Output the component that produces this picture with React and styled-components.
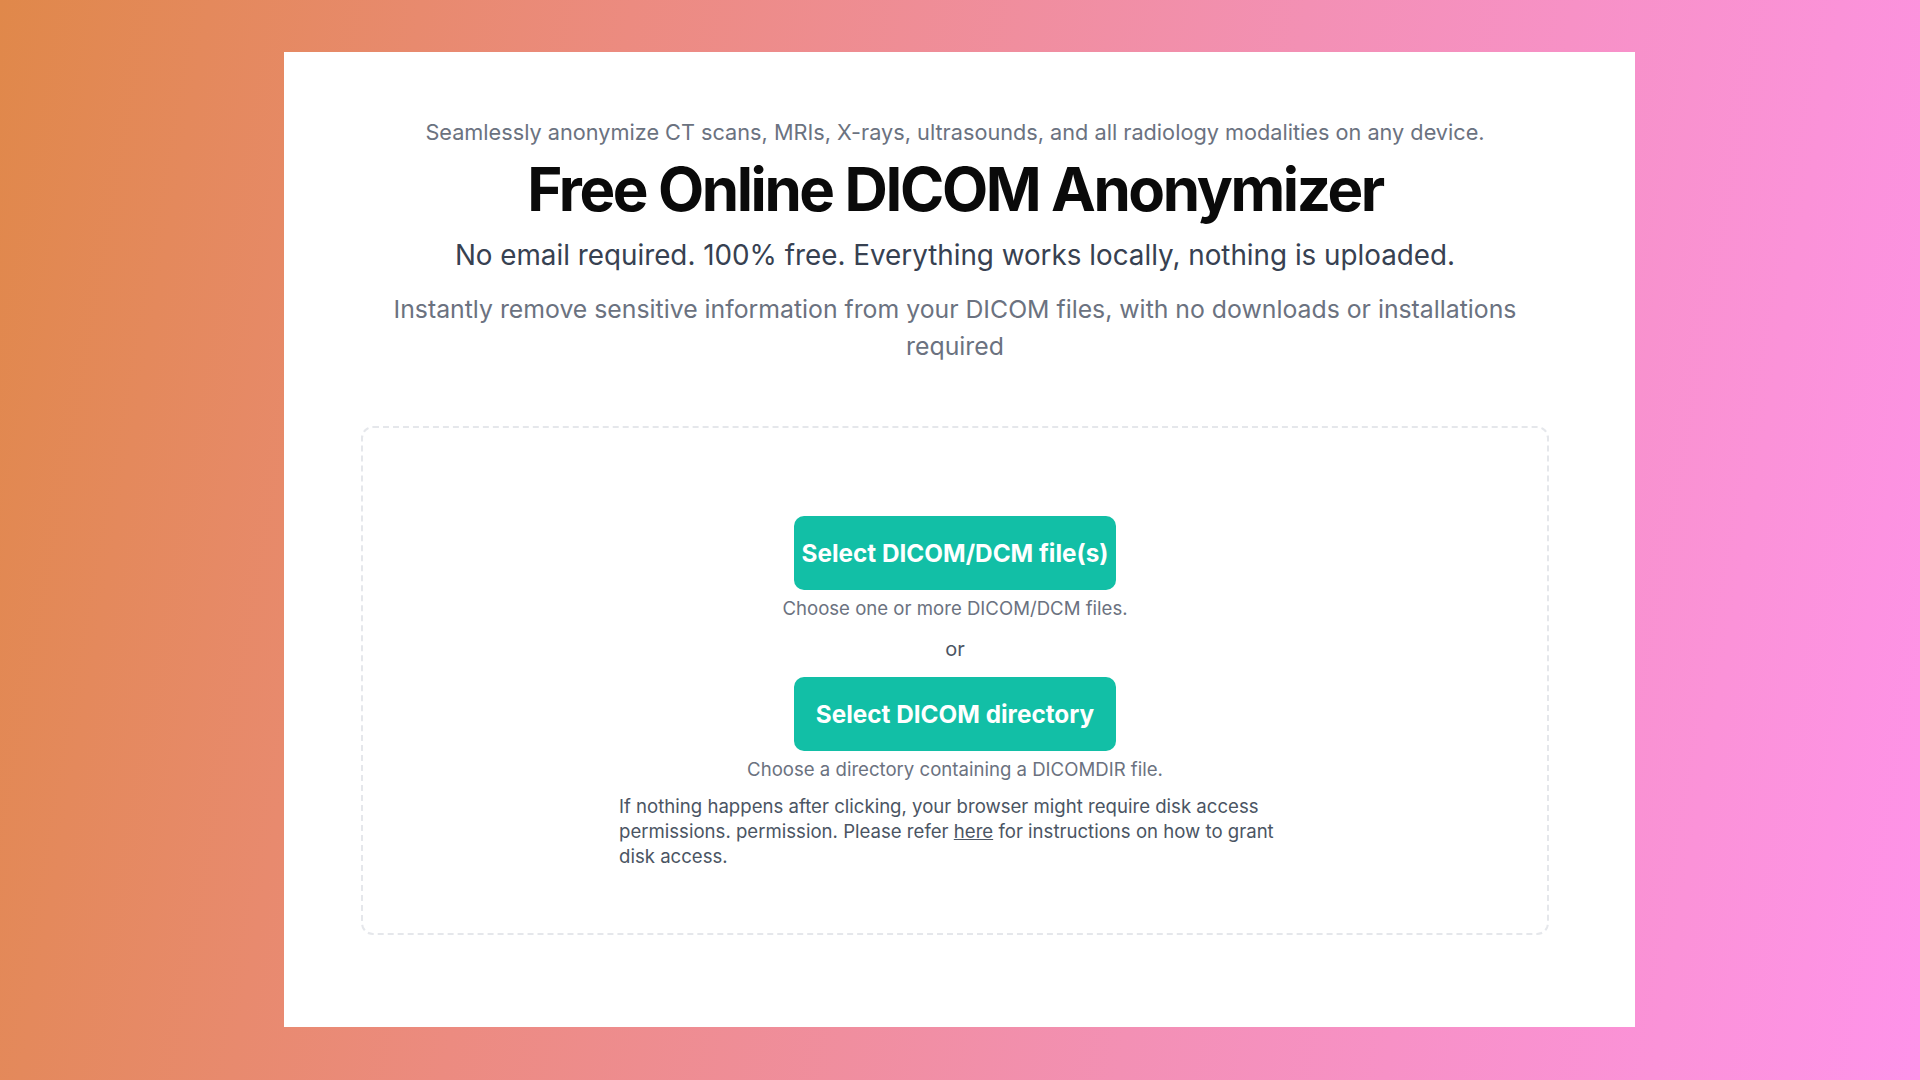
import React from "react";
import styled, { createGlobalStyle } from "styled-components";

const Global = createGlobalStyle`
  html, body { margin: 0; padding: 0; }
  body {
    font-family: Inter, "Noto Sans", "Liberation Sans", sans-serif;
    background: linear-gradient(100deg, #e0884a 0%, #ec8b80 30%, #f390b4 62%, #ff93ea 100%);
    min-height: 100vh;
  }
  #root { min-height: 100vh; }
`;

const Page = styled.div`
  padding-top: 52px;
  min-height: 1080px;
  box-sizing: border-box;
`;

const Card = styled.main`
  width: 1351px;
  margin: 0 0 0 284px;
  box-sizing: border-box;
  background: #ffffff;
  padding: 66px 86px 92px 77px;
  display: flex;
  flex-direction: column;
  align-items: center;
  text-align: center;
`;

const Eyebrow = styled.p`
  margin: 0;
  font-size: 21.7px;
  line-height: 28px;
  color: #6b7280;
`;

const Title = styled.h1`
  margin: 13px 0 0;
  font-size: 60px;
  line-height: 60px;
  font-weight: 700;
  letter-spacing: -0.04em;
  color: #0a0a0a;
`;

const Tagline = styled.p`
  margin: 20px 0 0;
  font-size: 27.8px;
  line-height: 32px;
  color: #374151;
`;

const Description = styled.p`
  margin: 20px 0 0;
  font-size: 24.8px;
  line-height: 37px;
  color: #6b7280;
`;

const DropZone = styled.section`
  margin-top: 61px;
  width: 100%;
  box-sizing: border-box;
  border: 2px dashed #e5e7eb;
  border-radius: 12px;
  padding: 88px 24px 64px;
  display: flex;
  flex-direction: column;
  align-items: center;
`;

const PickButton = styled.button`
  width: 322px;
  height: 74px;
  border: none;
  border-radius: 10px;
  background: #12bfa6;
  color: #ffffff;
  font-family: Inter, "Noto Sans", "Liberation Sans", sans-serif;
  font-size: 24.3px;
  font-weight: 700;
  cursor: pointer;
  margin-top: ${(p) => p.$gap || 0}px;
  padding: 0;
`;

const Hint = styled.p`
  margin: ${(p) => p.$gap}px 0 0;
  font-size: 18.6px;
  line-height: 24px;
  color: #6b7280;
`;

const Or = styled.p`
  margin: 15px 0 0;
  font-size: 20px;
  line-height: 28px;
  color: #4b5563;
`;

const Note = styled.p`
  margin: 13px 0 0;
  max-width: 672px;
  font-size: 18.6px;
  line-height: 25px;
  color: #4b5563;
  text-align: left;
`;

const Link = styled.a`
  color: #4b5563;
  text-decoration: underline;
`;

export default function App() {
  return (
    <>
      <Global />
      <Page>
        <Card>
          <Eyebrow>
            Seamlessly anonymize CT scans, MRIs, X-rays, ultrasounds, and all radiology modalities on any device.
          </Eyebrow>
          <Title>Free Online DICOM Anonymizer</Title>
          <Tagline>
            No email required. 100% free. Everything works locally, nothing is uploaded.
          </Tagline>
          <Description>
            Instantly remove sensitive information from your DICOM files, with no downloads or installations required
          </Description>
          <DropZone>
            <PickButton type="button">Select DICOM/DCM file(s)</PickButton>
            <Hint $gap={6}>Choose one or more DICOM/DCM files.</Hint>
            <Or>or</Or>
            <PickButton type="button" $gap={14}>Select DICOM directory</PickButton>
            <Hint $gap={6}>Choose a directory containing a DICOMDIR file.</Hint>
            <Note>
              If nothing happens after clicking, your browser might require disk access permissions. permission.
              Please refer <Link href="#">here</Link> for instructions on how to grant disk access.
            </Note>
          </DropZone>
        </Card>
      </Page>
    </>
  );
}
